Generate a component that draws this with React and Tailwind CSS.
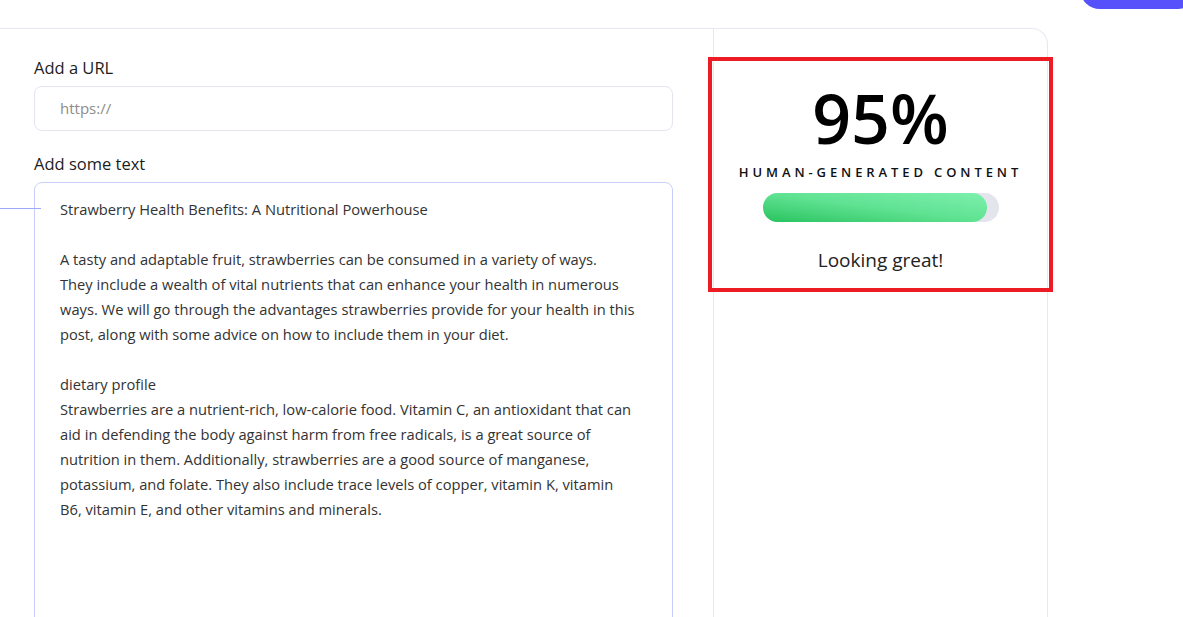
import React from 'react';

const lines = [
  'Strawberry Health Benefits: A Nutritional Powerhouse',
  '',
  'A tasty and adaptable fruit, strawberries can be consumed in a variety of ways.',
  'They include a wealth of vital nutrients that can enhance your health in numerous',
  'ways. We will go through the advantages strawberries provide for your health in this',
  'post, along with some advice on how to include them in your diet.',
  '',
  'dietary profile',
  'Strawberries are a nutrient-rich, low-calorie food. Vitamin C, an antioxidant that can',
  'aid in defending the body against harm from free radicals, is a great source of',
  'nutrition in them. Additionally, strawberries are a good source of manganese,',
  'potassium, and folate. They also include trace levels of copper, vitamin K, vitamin',
  'B6, vitamin E, and other vitamins and minerals.',
];

const score = 95;

const App = () => {
  return (
    <div className="min-h-screen bg-white overflow-hidden font-['Open_Sans',sans-serif] text-[#1c1c1c]">
      {/* top bar with cut-off action button */}
      <div className="h-[28px] flex justify-end">
        <button className="w-[118px] h-[40px] -mt-[31px] -mr-[15px] rounded-full bg-[#5651fb]" />
      </div>

      <div className="w-[1048px] h-[600px] flex border border-l-0 border-[#e6e7f0] rounded-tr-2xl">
        {/* input column */}
        <div className="w-[714px] border-r border-[#e6e7f0] pl-[34px] pr-[40px] pt-[27px]">
          <label className="block text-[16.5px] leading-[24px] font-medium mb-[6px]">Add a URL</label>
          <div className="h-[45px] rounded-lg border border-[#e4e5ef] flex items-center pl-[25px] text-[15px] text-[#8c8c8c]">
            https://
          </div>

          <label className="block text-[16.5px] leading-[24px] font-medium mt-[21px] mb-[6px]">Add some text</label>
          <div className="relative">
            <div className="absolute -left-[34px] top-[26px] w-[41px] h-px bg-[#9eaaf7]" />
            <div className="h-[460px] rounded-lg border border-[#c9cffb] pl-[25px] pt-[14px] text-[14.7px] leading-[25px] text-[#333]">
              {lines.map((l, i) => (
                <div key={i} className="whitespace-nowrap h-[25px]">{l}</div>
              ))}
            </div>
          </div>
        </div>

        {/* result column */}
        <div className="flex-1">
          <div className="mt-[28px] -ml-[6px] -mr-[6px] border-4 border-[#ed1c24] flex flex-col items-center pt-[22px] pb-[14px]">
            <div className="text-[68px] leading-[70px] font-semibold text-black">{score}%</div>
            <div className="mt-[10px] text-[13px] leading-[18px] font-semibold tracking-[3.9px] text-[#111]">
              HUMAN-GENERATED CONTENT
            </div>
            <div className="mt-[12px] w-[236px] h-[29px] rounded-full bg-gradient-to-r from-[#f1f2f6] to-[#e3e4ec]">
              <div
                className="h-full rounded-full bg-gradient-to-tr from-[#22c35e] via-[#5fe292] to-[#7df0ad]"
                style={{ width: `${score}%` }}
              />
            </div>
            <div className="mt-[24px] text-[19px] leading-[28px] text-[#222]">Looking great!</div>
          </div>
        </div>
      </div>
    </div>
  );
};

export default App;
